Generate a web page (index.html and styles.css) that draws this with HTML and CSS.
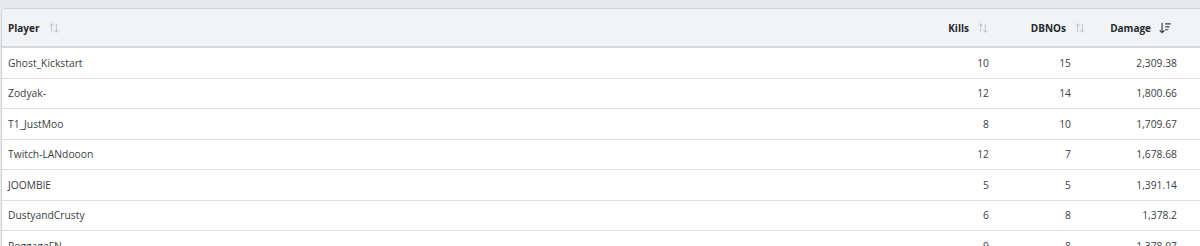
FILE: index.html
```html
<!DOCTYPE html>
<html>
<head>
<meta charset="utf-8">
<link rel="stylesheet" href="styles.css">
</head>
<body>
<div class="card">
  <div class="row head">
    <div class="cell c-player"><span class="hd">Player <svg class="ico" viewBox="0 0 24 24"><path d="M8 19V5M5 8l3-3 3 3M16 5v14M13 16l3 3 3-3"/></svg></span></div>
    <div class="cell c-kills"><span class="hd">Kills <svg class="ico" viewBox="0 0 24 24"><path d="M8 19V5M5 8l3-3 3 3M16 5v14M13 16l3 3 3-3"/></svg></span></div>
    <div class="cell c-dbno"><span class="hd">DBNOs <svg class="ico" viewBox="0 0 24 24"><path d="M8 19V5M5 8l3-3 3 3M16 5v14M13 16l3 3 3-3"/></svg></span></div>
    <div class="cell c-dmg"><span class="hd">Damage <svg class="ico active" viewBox="0 0 24 24"><path d="M7 4v16M3.5 16.5 7 20l3.5-3.5M13 5h8M13 10h6M13 15h4"/></svg></span></div>
  </div>
  <div class="row"><div class="cell c-player">Ghost_Kickstart</div><div class="cell c-kills">10</div><div class="cell c-dbno">15</div><div class="cell c-dmg">2,309.38</div></div>
  <div class="row"><div class="cell c-player">Zodyak-</div><div class="cell c-kills">12</div><div class="cell c-dbno">14</div><div class="cell c-dmg">1,800.66</div></div>
  <div class="row"><div class="cell c-player">T1_JustMoo</div><div class="cell c-kills">8</div><div class="cell c-dbno">10</div><div class="cell c-dmg">1,709.67</div></div>
  <div class="row"><div class="cell c-player">Twitch-LANdooon</div><div class="cell c-kills">12</div><div class="cell c-dbno">7</div><div class="cell c-dmg">1,678.68</div></div>
  <div class="row"><div class="cell c-player">JOOMBlE</div><div class="cell c-kills">5</div><div class="cell c-dbno">5</div><div class="cell c-dmg">1,391.14</div></div>
  <div class="row"><div class="cell c-player">DustyandCrusty</div><div class="cell c-kills">6</div><div class="cell c-dbno">8</div><div class="cell c-dmg">1,378.2</div></div>
  <div class="row"><div class="cell c-player">PoggageFN</div><div class="cell c-kills">9</div><div class="cell c-dbno">8</div><div class="cell c-dmg">1,378.07</div></div>
</div>
</body>
</html>
```
FILE: styles.css
```css
html, body {
  margin: 0;
  padding: 0;
  height: 246px;
  overflow: hidden;
  background: #e7e9ec;
}
body {
  padding: 8px 0 0 1px;
  box-sizing: border-box;
  font-family: "Open Sans", "Noto Sans", sans-serif;
}
.card {
  width: 1209px;
  background: #fff;
  border: 1px solid #cfd3d8;
  border-right: none;
  border-radius: 5px 0 0 0;
  overflow: hidden;
}
.row {
  display: grid;
  grid-template-columns: 1fr 100px 90px 120px;
  height: 30.5px;
  box-sizing: border-box;
  border-bottom: 1px solid #dcdfe3;
  font-size: 10.3px;
  color: #3c4044;
}
.row.head {
  height: 39px;
  background: #f1f3f5;
  border-bottom: 2px solid #d6dadf;
  font-size: 10px;
  font-weight: 700;
  color: #25292e;
}
.cell {
  display: flex;
  align-items: center;
  white-space: nowrap;
}
.c-player { padding-left: 6px; }
.c-kills, .c-dbno, .c-dmg { justify-content: flex-end; }
.c-kills { padding-right: 12px; }
.c-dbno { padding-right: 20px; }
.c-dmg { padding-right: 34px; }
.head .c-kills { padding-right: 11px; }
.head .c-dbno { padding-right: 4px; }
.head .c-dmg { padding-right: 39px; }
.hd {
  display: inline-flex;
  align-items: center;
  gap: 7px;
}
.ico {
  width: 14px;
  height: 14px;
  fill: none;
  stroke: #b9bec4;
  stroke-width: 1.6;
  stroke-linecap: round;
  stroke-linejoin: round;
}
.ico.active {
  stroke: #3a3f45;
  stroke-width: 2;
}
```
